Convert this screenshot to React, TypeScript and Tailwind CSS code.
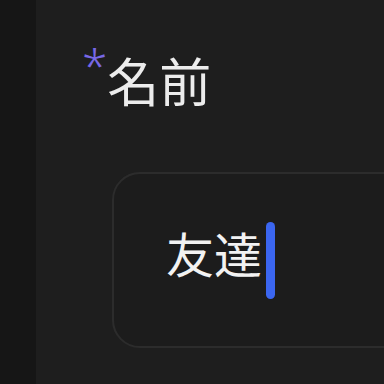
export default function App() {
  return (
    <div
      className="flex h-[384px] w-[384px] overflow-hidden bg-[#1e1e1e]"
      style={{ fontFamily: '"Noto Sans", "Noto Sans CJK JP", sans-serif' }}
    >
      {/* left rail */}
      <div className="w-[36px] shrink-0 bg-[#161616]" />

      <main className="flex flex-1 flex-col pt-[42px]">
        {/* label */}
        <div className="flex items-start pl-[46px]">
          <span className="text-[46px] font-light leading-none text-[#7868e6]">*</span>
          <span className="mt-[14px] text-[52px] leading-none text-[#ececec]">名前</span>
        </div>

        {/* input */}
        <div className="mt-[64px] ml-[76px] flex h-[176px] w-[320px] items-center rounded-[28px] border-2 border-[#2c2c2c] bg-[#1c1c1c] pl-[52px]">
          <span className="mb-[10px] text-[48px] leading-none text-[#f2f2f2]">友達</span>
          <span className="ml-[4px] h-[77px] w-[9px] rounded-full bg-[#3b66f0]" />
        </div>
      </main>
    </div>
  );
}
